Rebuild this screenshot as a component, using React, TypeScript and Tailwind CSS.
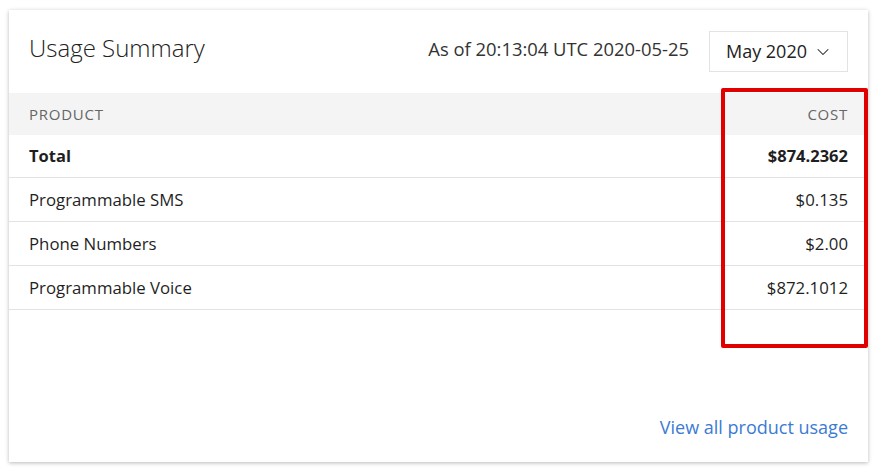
import { ChevronDown } from "lucide-react";

const rows = [
  { name: "Programmable SMS", cost: "$0.135" },
  { name: "Phone Numbers", cost: "$2.00" },
  { name: "Programmable Voice", cost: "$872.1012" },
];

export default function App() {
  return (
    <div
      className="relative h-[474px] w-[880px] bg-white pt-[10px] pl-[9px] text-[#1f1f1f]"
      style={{ fontFamily: '"Open Sans", "Liberation Sans", sans-serif' }}
    >
      <div className="flex h-[452px] w-[859px] flex-col bg-white shadow-[0_1px_4px_rgba(0,0,0,0.28)]">
        {/* header */}
        <div className="flex h-[83px] items-start px-5 pt-[21px]">
          <h2 className="text-[24px] font-light leading-[34px] text-[#222]">Usage Summary</h2>
          <div className="ml-auto flex items-center gap-5">
            <span className="mb-[5px] text-[18.4px] leading-[30px] text-[#333]">As of 20:13:04 UTC 2020-05-25</span>
            <button className="flex h-[41px] items-center gap-[6px] border border-[#e3e3e3] pr-[14px] pl-4 text-[18px] text-[#222]">
              May 2020
              <ChevronDown size={20} strokeWidth={1.25} />
            </button>
          </div>
        </div>

        {/* table */}
        <div className="flex h-[42px] items-center justify-between bg-[#f4f4f4] px-5 text-[15px] tracking-[0.05em] text-[#666]">
          <span>PRODUCT</span>
          <span>COST</span>
        </div>
        <div className="flex h-[43px] items-center justify-between border-b border-[#e2e2e2] px-5 text-[16.5px] font-bold">
          <span>Total</span>
          <span>$874.2362</span>
        </div>
        {rows.map((r) => (
          <div
            key={r.name}
            className="flex h-[44px] items-center justify-between border-b border-[#e2e2e2] px-5 text-[16.8px]"
          >
            <span>{r.name}</span>
            <span>{r.cost}</span>
          </div>
        ))}

        <div className="mt-auto flex justify-end px-5 pb-[21px]">
          <a className="text-[18px] text-[#3b7bd4]" href="#">
            View all product usage
          </a>
        </div>
      </div>

      {/* annotation highlight */}
      <div className="absolute top-[88px] left-[721px] h-[260px] w-[147px] rounded-[2px] border-4 border-[#e00000]" />
    </div>
  );
}
